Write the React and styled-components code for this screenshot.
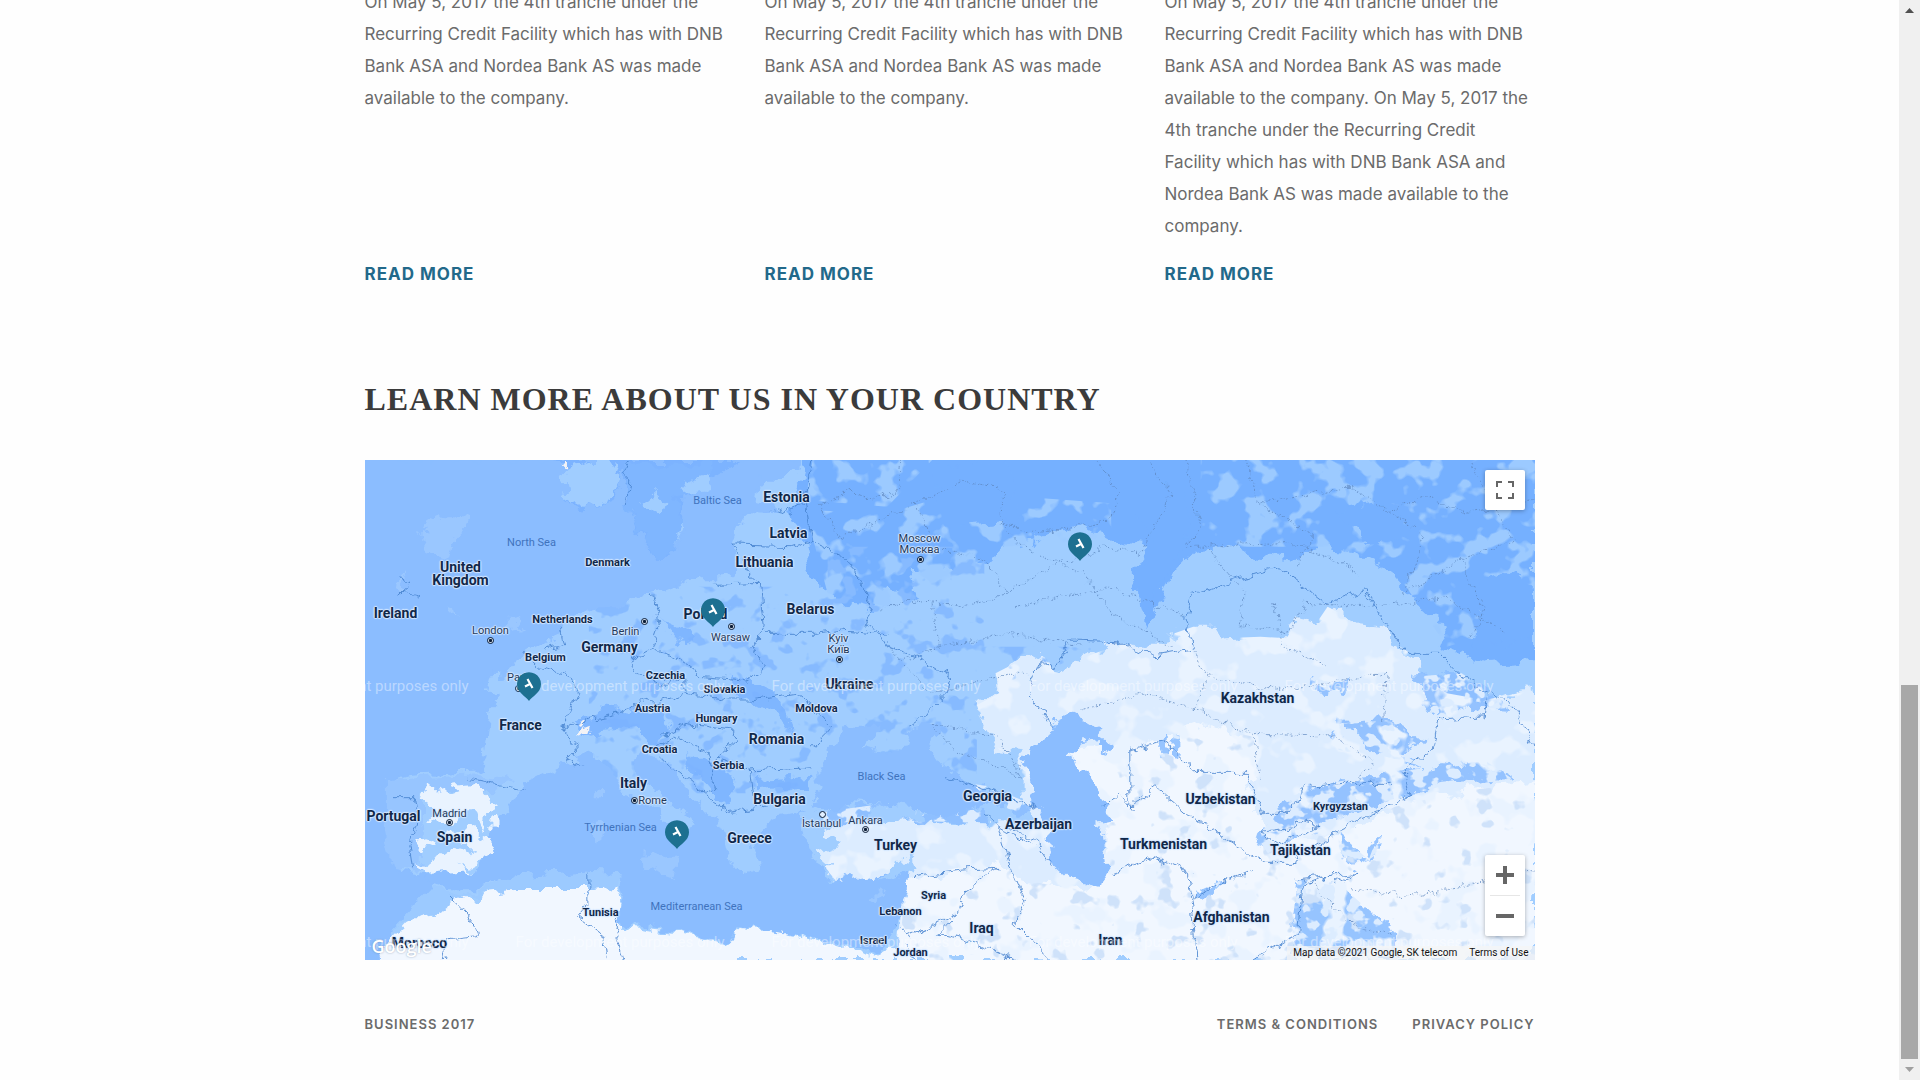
import React from "react";
import styled, { createGlobalStyle } from "styled-components";

const GlobalStyle = createGlobalStyle`
  *, *::before, *::after { box-sizing: border-box; }
  body { margin: 0; background: #fefefe; }
`;

const sans = `Inter, "Liberation Sans", sans-serif`;

const Window = styled.div`
  display: flex;
  height: 100vh;
  overflow: hidden;
  font-family: ${sans};
  color: #6b6b6b;
`;

const Page = styled.div`
  flex: 1;
  min-width: 0;
  display: flex;
  flex-direction: column;
  justify-content: flex-end;
`;

const Container = styled.div`
  width: 100%;
  max-width: 1170px;
  margin: 0 auto;
  flex-shrink: 0;
`;

const NewsGrid = styled.section`
  display: grid;
  grid-template-columns: repeat(3, 1fr);
  column-gap: 30px;
`;

const Article = styled.article`
  display: flex;
  flex-direction: column;
  justify-content: space-between;
  align-items: flex-start;
  gap: 16px;
`;

const Excerpt = styled.p`
  margin: 0;
  font-size: 17px;
  line-height: 32px;
`;

const ReadMore = styled.a`
  font-size: 17px;
  font-weight: 700;
  line-height: 32px;
  letter-spacing: 1px;
  text-transform: uppercase;
  text-decoration: none;
  color: #22698a;
`;

const Title = styled.h2`
  margin: 89px 0 41px;
  font-family: "Liberation Serif", serif;
  font-size: 32px;
  font-weight: 700;
  line-height: 40px;
  letter-spacing: 1px;
  text-transform: uppercase;
  color: #3b3b3b;
`;

const MapFrame = styled.section`
  position: relative;
  height: 500px;
  overflow: hidden;
  background: #8bbdff;
  font-family: Roboto, sans-serif;
`;

const Terrain = styled.svg`
  display: block;
  width: 100%;
  height: 100%;
`;

const onMap = ({ $x, $y }) => `
  left: calc(50% + ${$x - 585}px);
  top: ${$y}px;
`;

const kinds = {
  country: "font-size: 14px; font-weight: 700; line-height: 13px; color: #10284a;",
  small: "font-size: 11px; font-weight: 700; line-height: 12px; color: #10284a;",
  city: "font-size: 11px; font-weight: 400; line-height: 11px; color: #23395b;",
  sea: "font-size: 11px; font-weight: 400; line-height: 12px; color: #3f73bd; text-shadow: none;",
};

const Label = styled.span`
  position: absolute;
  ${onMap}
  transform: translate(-50%, -50%);
  text-align: center;
  white-space: pre;
  text-shadow: 0 0 2px #e3f0ff, 1px 0 1px #cfe4ff, -1px 0 1px #cfe4ff, 0 1px 1px #cfe4ff, 0 -1px 1px #cfe4ff;
  ${({ $kind }) => kinds[$kind]}
`;

const Capital = styled.i`
  position: absolute;
  ${onMap}
  width: 7px;
  height: 7px;
  margin: -3px 0 0 -3px;
  border: 1px solid #0c1d36;
  border-radius: 50%;
  background: ${({ $hollow }) => ($hollow ? "#e3f0ff" : "radial-gradient(#0c1d36 35%, #e3f0ff 60%)")};
`;

const Watermark = styled.span`
  position: absolute;
  ${onMap}
  transform: translateY(-50%);
  font-size: 15px;
  line-height: 20px;
  white-space: nowrap;
  color: rgba(255, 255, 255, 0.42);
`;

const Pin = styled.button`
  position: absolute;
  ${onMap}
  width: 24px;
  height: 30px;
  margin: -29px 0 0 -12px;
  padding: 0;
  border: 0;
  background: none;
  cursor: pointer;
  svg { display: block; }
`;

const GoogleMark = styled.a`
  position: absolute;
  left: 7px;
  bottom: 2px;
  font-family: "Open Sans", sans-serif;
  font-size: 18px;
  font-weight: 600;
  line-height: 24px;
  text-decoration: none;
  color: #ffffff;
  text-shadow: 0 0 2px rgba(90, 110, 140, 0.6);
`;

const Controls = styled.div`
  position: absolute;
  right: 10px;
  ${({ $edge }) => $edge};
  display: flex;
  flex-direction: column;
  align-items: center;
  width: 40px;
  border-radius: 2px;
  background: #ffffff;
  box-shadow: 0 1px 4px rgba(0, 0, 0, 0.3);
`;

const Control = styled.button`
  display: grid;
  place-items: center;
  width: 40px;
  height: 40px;
  padding: 0;
  border: 0;
  background: none;
  cursor: pointer;
`;

const Divider = styled.span`
  width: 30px;
  height: 1px;
  background: #e6e6e6;
`;

const Attribution = styled.div`
  position: absolute;
  right: 0;
  bottom: 0;
  display: flex;
  gap: 12px;
  padding: 0 6px;
  background: rgba(245, 245, 245, 0.7);
  font-size: 10px;
  line-height: 14px;
  color: #111111;
  a { color: inherit; text-decoration: none; }
`;

const Footer = styled.footer`
  display: flex;
  justify-content: space-between;
  align-items: center;
  padding: 54px 0 46px;
  font-size: 13px;
  font-weight: 600;
  line-height: 20px;
  letter-spacing: 1px;
  text-transform: uppercase;
`;

const FooterLinks = styled.nav`
  display: flex;
  gap: 34px;
  a { color: inherit; text-decoration: none; }
`;

const ScrollBar = styled.div`
  flex: none;
  display: flex;
  flex-direction: column;
  justify-content: space-between;
  width: 21px;
  padding: 0 2px;
  background: #f0f0f0;
`;

const ScrollArrow = styled.button`
  display: grid;
  place-items: center;
  width: 17px;
  height: 21px;
  padding: 0;
  border: 0;
  background: none;
`;

const Thumb = styled.div`
  height: 374px;
  margin-top: auto;
  background: #a8a8a8;
`;

const tranche =
  "On May 5, 2017 the 4th tranche under the Recurring Credit Facility which has with DNB Bank ASA and Nordea Bank AS was made available to the company.";
const articles = [tranche, tranche, `${tranche} ${tranche}`];

const labels = [
  ["country", 96, 114, "United\nKingdom"], ["country", 31, 153, "Ireland"],
  ["country", 245, 187, "Germany"], ["country", 341, 154, "Poland"],
  ["country", 422, 37, "Estonia"], ["country", 424, 73, "Latvia"],
  ["country", 400, 102, "Lithuania"], ["country", 446, 149, "Belarus"],
  ["country", 485, 224, "Ukraine"], ["country", 893, 238, "Kazakhstan"],
  ["country", 156, 265, "France"], ["country", 269, 323, "Italy"],
  ["country", 29, 356, "Portugal"], ["country", 90, 377, "Spain"],
  ["country", 55, 483, "Morocco"], ["country", 412, 279, "Romania"],
  ["country", 415, 339, "Bulgaria"], ["country", 385, 378, "Greece"],
  ["country", 531, 385, "Turkey"], ["country", 623, 336, "Georgia"],
  ["country", 674, 364, "Azerbaijan"], ["country", 617, 468, "Iraq"],
  ["country", 746, 480, "Iran"], ["country", 856, 339, "Uzbekistan"],
  ["country", 799, 384, "Turkmenistan"], ["country", 936, 390, "Tajikistan"],
  ["country", 867, 457, "Afghanistan"],
  ["small", 243, 103, "Denmark"], ["small", 198, 160, "Netherlands"],
  ["small", 181, 198, "Belgium"], ["small", 301, 216, "Czechia"],
  ["small", 360, 230, "Slovakia"], ["small", 288, 249, "Austria"],
  ["small", 352, 259, "Hungary"], ["small", 295, 290, "Croatia"],
  ["small", 364, 306, "Serbia"], ["small", 452, 249, "Moldova"],
  ["small", 236, 453, "Tunisia"], ["small", 569, 436, "Syria"],
  ["small", 536, 452, "Lebanon"], ["small", 509, 481, "Israel"],
  ["small", 546, 493, "Jordan"], ["small", 976, 347, "Kyrgyzstan"],
  ["city", 126, 170, "London"], ["city", 261, 171, "Berlin"],
  ["city", 366, 177, "Warsaw"], ["city", 155, 217, "Paris"],
  ["city", 555, 84, "Moscow\nМосква"], ["city", 474, 184, "Kyiv\nКиїв"],
  ["city", 288, 340, "Rome"], ["city", 85, 353, "Madrid"],
  ["city", 457, 363, "İstanbul"], ["city", 501, 360, "Ankara"],
  ["sea", 167, 83, "North Sea"], ["sea", 353, 41, "Baltic Sea"],
  ["sea", 256, 368, "Tyrrhenian Sea"], ["sea", 332, 447, "Mediterranean Sea"],
  ["sea", 517, 317, "Black Sea"],
];

const capitals = [
  [125, 180], [279, 161], [366, 166], [153, 228], [555, 99],
  [474, 199], [269, 340], [84, 362], [457, 354, true], [500, 369],
];

const watermarks = [-105, 151, 407, 664, 920].flatMap((x) => [[x, 226], [x, 482]]);
const pins = [[164, 241, "France"], [348, 167, "Poland"], [715, 101, "Russia"], [312, 389, "Italy"]];

const shapes = {
  north:
    "M590 0L1568 0 1568 600 1500 610 1440 560 1450 500 1400 400 1370 330 1330 280 1290 260 1250 300 1200 290 1150 260 1110 270 1080 340 1060 460 1048 505 1034 450 1030 330 1050 260 1000 240 960 190 900 240 850 260 830 310 790 330 730 330 740 420 700 380 680 450 650 440 600 360 590 260 570 160Z",
  clearings:
    "M590 150L700 160 760 120 850 180 880 110 1000 130 1000 250 850 260 800 340 700 440 620 400Z M1120 0L1568 0 1568 480 1450 560 1380 330 1290 260 1120 260Z M600 0L760 0 700 140 590 120Z",
  ural: "M1025 0L1110 0 1100 120 1110 200 1085 300 1055 420 1046 500 1034 440 1036 330 1060 240 1025 150Z M1470 380L1540 330 1568 400 1568 540 1480 560 1500 470Z M1300 150L1380 130 1400 240 1340 250Z M760 20L860 0 880 180 770 200Z",
  steppe:
    "M820 735L850 700 845 640 880 600 905 575 925 640 955 600 990 570 1000 545 1040 560 1070 560 1085 520 1110 500 1140 500 1150 535 1200 530 1235 535 1250 480 1275 490 1290 440 1330 490 1370 500 1380 550 1410 590 1410 640 1450 700 1500 720 1568 690 1568 1500 715 1500 720 1250 735 1180 700 1240 680 1275 655 1240 630 1260 610 1200 605 1130 640 1085 720 1080 790 1090 850 1090 900 1100 880 1000 880 880 850 870 830 800Z",
  desert:
    "M940 860L1020 860 1060 840 1120 790 1190 830 1200 930 1180 1020 1220 1120 1300 1130 1380 1040 1480 990 1568 970 1568 1500 715 1500 725 1260 800 1240 850 1200 880 1260 960 1290 1000 1230 990 1100 970 1000Z",
  africa:
    "M20 1500L40 1430 60 1380 95 1370 120 1310 150 1320 180 1280 230 1260 300 1270 335 1250 345 1310 340 1400 420 1420 490 1450 500 1410 560 1420 640 1460 690 1490 720 1450 740 1500Z",
  maghreb: "M120 1310L150 1290 200 1250 300 1235 340 1240 350 1260 335 1280 300 1290 200 1290Z M90 1280L110 1290 130 1320 90 1370 40 1400Z",
  spain:
    "M80 1030L85 990 110 980 112 1010 125 1000 120 980 150 975 165 1010 178 1030 165 1070 160 1120 150 1060 125 1060 115 1090 85 1080 95 1050Z M110 1120L140 1100 155 1140 170 1150 165 1185 145 1210 120 1215 150 1230 100 1235 75 1245 70 1220 95 1200 120 1180 145 1160 125 1150Z M70 1150L95 1130 98 1155 75 1170Z M172 1085L178 1070 182 1100 172 1110Z",
  atlantic:
    "M0 0L350 0 350 130 372 240 390 290 410 290 430 200 420 120 460 60 470 0 590 0 560 60 530 60 525 120 545 130 550 165 520 160 500 200 490 260 500 300 490 350 450 350 400 390 370 400 345 440 310 440 290 470 265 480 250 540 215 570 190 640 165 645 160 690 180 715 165 750 158 900 150 935 60 945 35 960 28 1030 40 1060 28 1110 28 1200 50 1240 75 1250 90 1275 80 1330 40 1400 20 1500 0 1500Z",
  mediterranean:
    "M75 1250L100 1235 150 1230 175 1100 200 1010 215 965 260 915 300 880 330 930 350 1000 380 1030 400 1080 430 1120 437 1090 430 1060 400 1010 370 960 360 900 380 870 400 900 420 960 450 1030 470 1080 482 1130 488 1200 505 1240 525 1220 520 1150 545 1080 590 1060 600 1110 605 1180 625 1260 655 1235 680 1275 700 1230 730 1190 725 1280 715 1370 705 1440 690 1485 640 1450 560 1420 500 1405 490 1445 420 1415 340 1390 348 1310 340 1240 300 1235 200 1250 150 1285 110 1285 85 1270Z",
  aegean: "M580 1070L625 1050 612 1110 640 1150 605 1180 625 1220 605 1215 590 1140Z M672 1050L700 1035 760 1060 700 1090 660 1080Z M700 1230L730 1175 735 1230 690 1265Z",
  blackSea:
    "M605 990L605 930 620 880 645 800 690 800 680 830 670 860 700 880 730 870 715 820 740 800 770 790 755 850 785 940 820 990 840 1030 800 1055 760 1060 700 1035 660 1030 630 1060 600 1030Z",
  caspian:
    "M920 800L950 770 980 790 985 830 1003 855 1000 880 985 870 985 840 960 850 940 890 960 920 985 1000 995 1060 1000 1080 978 1090 990 1130 995 1230 980 1275 940 1250 920 1210 915 1100 895 1000 885 900Z",
  islands:
    "M85 190L105 160 140 170 130 220 115 240 110 290 85 270 75 220Z M50 330L60 380 45 400Z M115 430L120 470 110 460Z M190 480L215 500 190 510Z M370 1190L420 1180 412 1250 370 1215Z M303 1090L320 1080 318 1140 303 1150Z M306 1000L315 985 315 1030 305 1030Z M670 1310L700 1290 690 1320Z",
  norway: "M265 30L300 0 330 0 345 60 325 120 295 150 270 120Z M370 130L390 90 410 130 390 160Z M425 70L460 40 465 90 430 100Z",
  highlands:
    "M350 0L500 0 460 60 425 110 425 200 410 290 390 290 370 230 350 120Z M255 0L360 0 330 120 290 155 268 120 300 60Z M280 790L330 740 400 760 405 830 380 860 370 800 320 810 290 830Z M490 640L520 660 560 720 570 820 550 760 500 700Z M430 870L500 960 480 1040 450 960Z M520 960L600 950 590 980 520 990Z M400 480L440 520 430 560Z",
  ranges:
    "M1240 1010L1290 970 1400 930 1500 900 1540 960 1440 980 1340 1040 1260 1120 1210 1180 1195 1130Z M1295 830L1310 790 1370 780 1420 840 1380 870 1420 920 1350 880 1320 800 1305 820 1325 880 1305 870Z M1400 650L1470 640 1540 750 1480 740 1440 780Z M1250 1260L1310 1280 1370 1400 1390 1490 1240 1490Z M780 960L840 980 900 1040 880 1060 800 1000Z M600 1060L700 1030 830 1050 840 1090 700 1080 620 1090Z M1110 1300L1150 1260 1130 1310Z M1065 830L1075 820 1072 890 1060 890Z M1082 820L1092 830 1090 890 1080 880Z M1305 1120L1345 1200 1325 1220 1305 1170Z M1350 1170L1362 1140 1358 1180 1345 1200Z M1265 650L1300 670 1320 660 1310 700 1265 680Z",
};

const borders = [
  "M350 130L355 60 345 40 352 0", "M600 0L590 120 565 160 545 150M590 120L598 240 570 260 495 255M598 240L650 300 680 440 670 500 700 520",
  "M495 255L515 340 530 370 470 376M530 370L535 500 520 560 535 620 510 660 450 650 420 600 385 565 395 500 385 400",
  "M535 520L600 520 640 510 690 520 700 560 740 590 785 650 780 700 755 760 730 800",
  "M385 565L355 605 370 650 400 670 430 650 430 700 390 730 370 720 340 760 280 790 265 810 285 860 270 900 290 925",
  "M265 810L285 700 270 640 230 620 210 570M260 500L265 560 240 570",
  "M430 700L490 720 520 720 575 700 600 740 625 800 600 860",
  "M400 830L430 790 490 810 500 840 470 900 515 930 600 920M515 930L520 1010 570 1030",
  "M380 870L420 830 460 880 470 980 455 1000 400 900M455 1000L490 1060 540 1040",
  "M140 955L180 975 215 990M65 1225L60 1150 70 1080 65 1010 40 1010M115 1310L140 1370 150 1430 110 1440 105 1500",
  "M300 1240L300 1330 285 1370 320 1430 325 1500M340 1380L335 1420 345 1500M720 1450L740 1500",
  "M735 1250L800 1230 850 1225 805 1290 795 1360 730 1430 715 1400M795 1360L770 1420 820 1450 870 1500",
  "M850 1100L870 1250 885 1330 870 1390 920 1500M860 1100L900 1150 920 1220",
  "M890 680L905 600 920 630 945 540 1010 545 1060 590 1110 570 1100 470 1110 400 1225 320 1260 380 1290 430 1340 390 1395 580 1440 580 1470 650 1510 700 1540 740 1568 870",
  "M890 700L920 800M1025 860L1025 1040 1060 980 1100 1060 1205 1210 1240 1210 1300 1120 1400 1010 1390 940 1430 870 1440 780 1500 770 1505 700",
  "M1025 870L1070 845 1120 940 1180 940 1205 1060 1240 1060 1260 980 1310 970 1380 970",
  "M1000 1240L1060 1190 1105 1240 1110 1310 1190 1230M1105 1300L1110 1400 1115 1500M1190 1500L1250 1420 1255 1280 1300 1240",
  "M780 950L850 1000 900 1040M830 1060L850 1100 890 1150M990 1040L1010 1000 1030 1050",
  "M45 400L60 370 45 350M48 395L75 410M1200 1120L1240 1110 1250 1080 1280 1100 1220 1150Z M1250 1260L1330 1240 1300 1270",
];

const provinces = [
  "M720 0L715 90 680 120 650 90 610 130 640 240 690 180 740 130 800 60 840 80 860 100 850 190 900 220 1000 180 1010 100 980 0",
  "M740 130L760 260 830 300 860 400 800 440 740 420 690 450M860 400L920 320 990 260 1040 280 1080 100 1050 0",
  "M760 430L770 560 720 600M770 560L860 520 960 560M850 180L880 260 960 340 1000 460 1080 560",
  "M870 440L1000 380 1100 470M700 560L760 700 860 640 890 640M760 790L850 830 880 950 790 870Z",
  "M1100 0L1120 200 1100 260 1250 250 1330 340M1180 0L1200 130 1320 80 1370 150 1420 110 1470 160 1568 120",
  "M1200 130L1270 230 1250 320M1370 150L1420 230 1390 400 1470 300 1540 240 1480 0M1470 300L1500 450 1480 540",
  "M1130 270L1180 400 1170 500 1240 510 1260 430 1340 440M1340 440L1400 430 1450 410 1530 520",
  "M1110 580L1130 650 1220 690 1320 660 1370 640 1365 780M1130 650L1110 750 1040 700 960 750M1110 750L1190 820 1300 825M1190 820L1200 960",
  "M1220 430L1230 560 1290 620M1290 820L1350 900 1330 960M1320 1280L1400 1310 1568 1230M1260 1260L1330 1400 1380 1420",
];

const Patches = ({ id, seed, frequency, cut, color }) => (
  <filter id={id} x="0" y="0" width="100%" height="100%">
    <feTurbulence type="fractalNoise" baseFrequency={frequency} numOctaves="3" seed={seed} />
    <feColorMatrix values={`0 0 0 0 0  0 0 0 0 0  0 0 0 0 0  0 0 0 12 ${cut}`} result="mask" />
    <feFlood floodColor={color} />
    <feComposite in2="mask" operator="in" />
    <feComposite in2="SourceAlpha" operator="in" />
  </filter>
);

function MapTerrain() {
  return (
    <Terrain viewBox="0 0 1170 500" preserveAspectRatio="xMidYMid slice" aria-hidden="true">
      <defs>
        <filter id="coast" x="-2%" y="-2%" width="104%" height="104%">
          <feTurbulence type="fractalNoise" baseFrequency="0.06" numOctaves="4" seed="4" />
          <feDisplacementMap in="SourceGraphic" scale="20" xChannelSelector="R" yChannelSelector="G" />
        </filter>
        <filter id="wobble" x="-2%" y="-2%" width="104%" height="104%">
          <feTurbulence type="fractalNoise" baseFrequency="0.09" numOctaves="3" seed="9" />
          <feDisplacementMap in="SourceGraphic" scale="12" xChannelSelector="R" yChannelSelector="G" />
        </filter>
        <Patches id="clearings" seed="3" frequency="0.028 0.014" cut="-6.4" color="#9ccaff" />
        <Patches id="woods" seed="12" frequency="0.035 0.017" cut="-7" color="#86baff" />
        <Patches id="scrub" seed="21" frequency="0.025 0.012" cut="-6.6" color="#e9f3ff" />
        <Patches id="rock" seed="7" frequency="0.035 0.017" cut="-7.8" color="#cfe2fa" />
        <Patches id="snow" seed="17" frequency="0.05 0.025" cut="-6.2" color="#dcecff" />
      </defs>
      <g filter="url(#coast)">
        <g transform="scale(0.74617 0.33333)">
          <path d="M-40 -60H1610V1560H-40Z" fill="#a0cdff" />
          <path d={shapes.north} fill="#75b0ff" />
          <path d="M-40 -60H1610V10H-40Z" fill="#75b0ff" />
          <path d={shapes.steppe} fill="#dcecff" />
          <path d={shapes.desert} fill="#f1f7ff" />
          <path d={shapes.ranges} fill="#8cbeff" fillOpacity="0.9" />
        </g>
      </g>
      <g transform="scale(0.74617 0.33333)">
        <path d={shapes.clearings} filter="url(#clearings)" />
        <path d="M300 380H620V260H830V560H1000L820 700V1000H300Z" filter="url(#woods)" />
        <path d={shapes.steppe} filter="url(#scrub)" />
        <path d={shapes.desert} filter="url(#rock)" />
        <path d={shapes.ranges} filter="url(#snow)" />
      </g>
      <g filter="url(#coast)">
        <g transform="scale(0.74617 0.33333)">
          <path d={shapes.ural} fill="#75b0ff" />
          <path d="M-40 -60H590V10H-40Z" fill="#8bbdff" />
          <path d={shapes.atlantic} fill="#8bbdff" stroke="#8bbdff" strokeWidth="4" />
          <path d="M-40 -60H40V1560H-40Z" fill="#8bbdff" />
          <path d={shapes.mediterranean} fill="#8bbdff" />
          <path d={shapes.blackSea} fill="#8bbdff" />
          <path d={shapes.caspian} fill="#8bbdff" />
          <path d={shapes.aegean} fill="#a0cdff" />
          <path d="M28 960L150 945 200 960 170 1000 80 1000 75 1240 40 1230 28 1100Z" fill="#97c5ff" />
          <path d={shapes.africa} fill="#f1f7ff" />
          <path d="M20 1490H500V1560H20Z" fill="#f1f7ff" />
          <path d={shapes.maghreb} fill="#9ccaff" />
          <path d={shapes.spain} fill="#e9f3ff" />
          <path d={shapes.islands} fill="#9ac7ff" />
          <path d={shapes.highlands} fill="#79b2ff" fillOpacity="0.85" />
          <path d={shapes.norway} fill="#a0cdff" />
          <path d="M286 800L300 788 298 815 280 830Z M262 20L268 5 268 22Z" fill="#f3f3f6" />
        </g>
      </g>
      <g filter="url(#wobble)">
        <g transform="scale(0.74617 0.33333)" fill="none">
          {provinces.map((d) => (
            <path key={d} d={d} stroke="#5c86bd" strokeOpacity="0.75" strokeDasharray="2 2" vectorEffect="non-scaling-stroke" />
          ))}
          {borders.map((d) => (
            <path key={d} d={d} stroke="#4682cf" strokeOpacity="0.85" vectorEffect="non-scaling-stroke" />
          ))}
        </g>
      </g>
    </Terrain>
  );
}

function CountryMap() {
  return (
    <MapFrame aria-label="Map of our offices">
      <MapTerrain />
      {capitals.map(([x, y, hollow]) => (
        <Capital key={`${x}-${y}`} $x={x} $y={y} $hollow={hollow} />
      ))}
      {labels.map(([kind, x, y, text]) => (
        <Label key={text} $kind={kind} $x={x} $y={y}>{text}</Label>
      ))}
      {watermarks.map(([x, y]) => (
        <Watermark key={`${x}-${y}`} $x={x} $y={y}>For development purposes only</Watermark>
      ))}
      {pins.map(([x, y, name]) => (
        <Pin key={name} $x={x} $y={y} aria-label={name}>
          <svg width="24" height="30" viewBox="0 0 24 30">
            <path d="M12 29C10 26 4 22 1.500 18A12 12 0 1 1 22.500 18C20 22 14 26 12 29Z" fill="#1d7091" />
            <path d="M10.500 7L15.500 16M13 12L8 14.500" fill="none" stroke="#ffffff" strokeWidth="2.200" />
          </svg>
        </Pin>
      ))}
      <GoogleMark href="#google">Google</GoogleMark>
      <Controls $edge="top: 10px">
        <Control aria-label="Toggle fullscreen view">
          <svg width="18" height="18" viewBox="0 0 18 18" fill="none" stroke="#666666" strokeWidth="2">
            <path d="M1 6V1H6M12 1H17V6M17 12V17H12M6 17H1V12" />
          </svg>
        </Control>
      </Controls>
      <Controls $edge="bottom: 24px">
        <Control aria-label="Zoom in">
          <svg width="18" height="18" viewBox="0 0 18 18" fill="#666666">
            <path d="M7 0H11V7H18V11H11V18H7V11H0V7H7Z" />
          </svg>
        </Control>
        <Divider />
        <Control aria-label="Zoom out">
          <svg width="18" height="18" viewBox="0 0 18 18" fill="#666666">
            <path d="M0 7H18V11H0Z" />
          </svg>
        </Control>
      </Controls>
      <Attribution>
        <span>Map data ©2021 Google, SK telecom</span>
        <a href="#terms-of-use">Terms of Use</a>
      </Attribution>
    </MapFrame>
  );
}

export default function App() {
  return (
    <Window>
      <GlobalStyle />
      <Page>
        <Container>
          <NewsGrid>
            {articles.map((text, index) => (
              <Article key={index}>
                <Excerpt>{text}</Excerpt>
                <ReadMore href="#read-more">Read more</ReadMore>
              </Article>
            ))}
          </NewsGrid>
          <Title>Learn more about us in your country</Title>
          <CountryMap />
          <Footer>
            <span>Business 2017</span>
            <FooterLinks>
              <a href="#terms">Terms &amp; Conditions</a>
              <a href="#privacy">Privacy Policy</a>
            </FooterLinks>
          </Footer>
        </Container>
      </Page>
      <ScrollBar>
        <ScrollArrow aria-label="Scroll up">
          <svg width="9" height="5" viewBox="0 0 9 5"><path d="M0 5L4.500 0 9 5Z" fill="#505050" /></svg>
        </ScrollArrow>
        <Thumb />
        <ScrollArrow aria-label="Scroll down">
          <svg width="9" height="5" viewBox="0 0 9 5"><path d="M0 0L4.500 5 9 0Z" fill="#a0a0a0" /></svg>
        </ScrollArrow>
      </ScrollBar>
    </Window>
  );
}
